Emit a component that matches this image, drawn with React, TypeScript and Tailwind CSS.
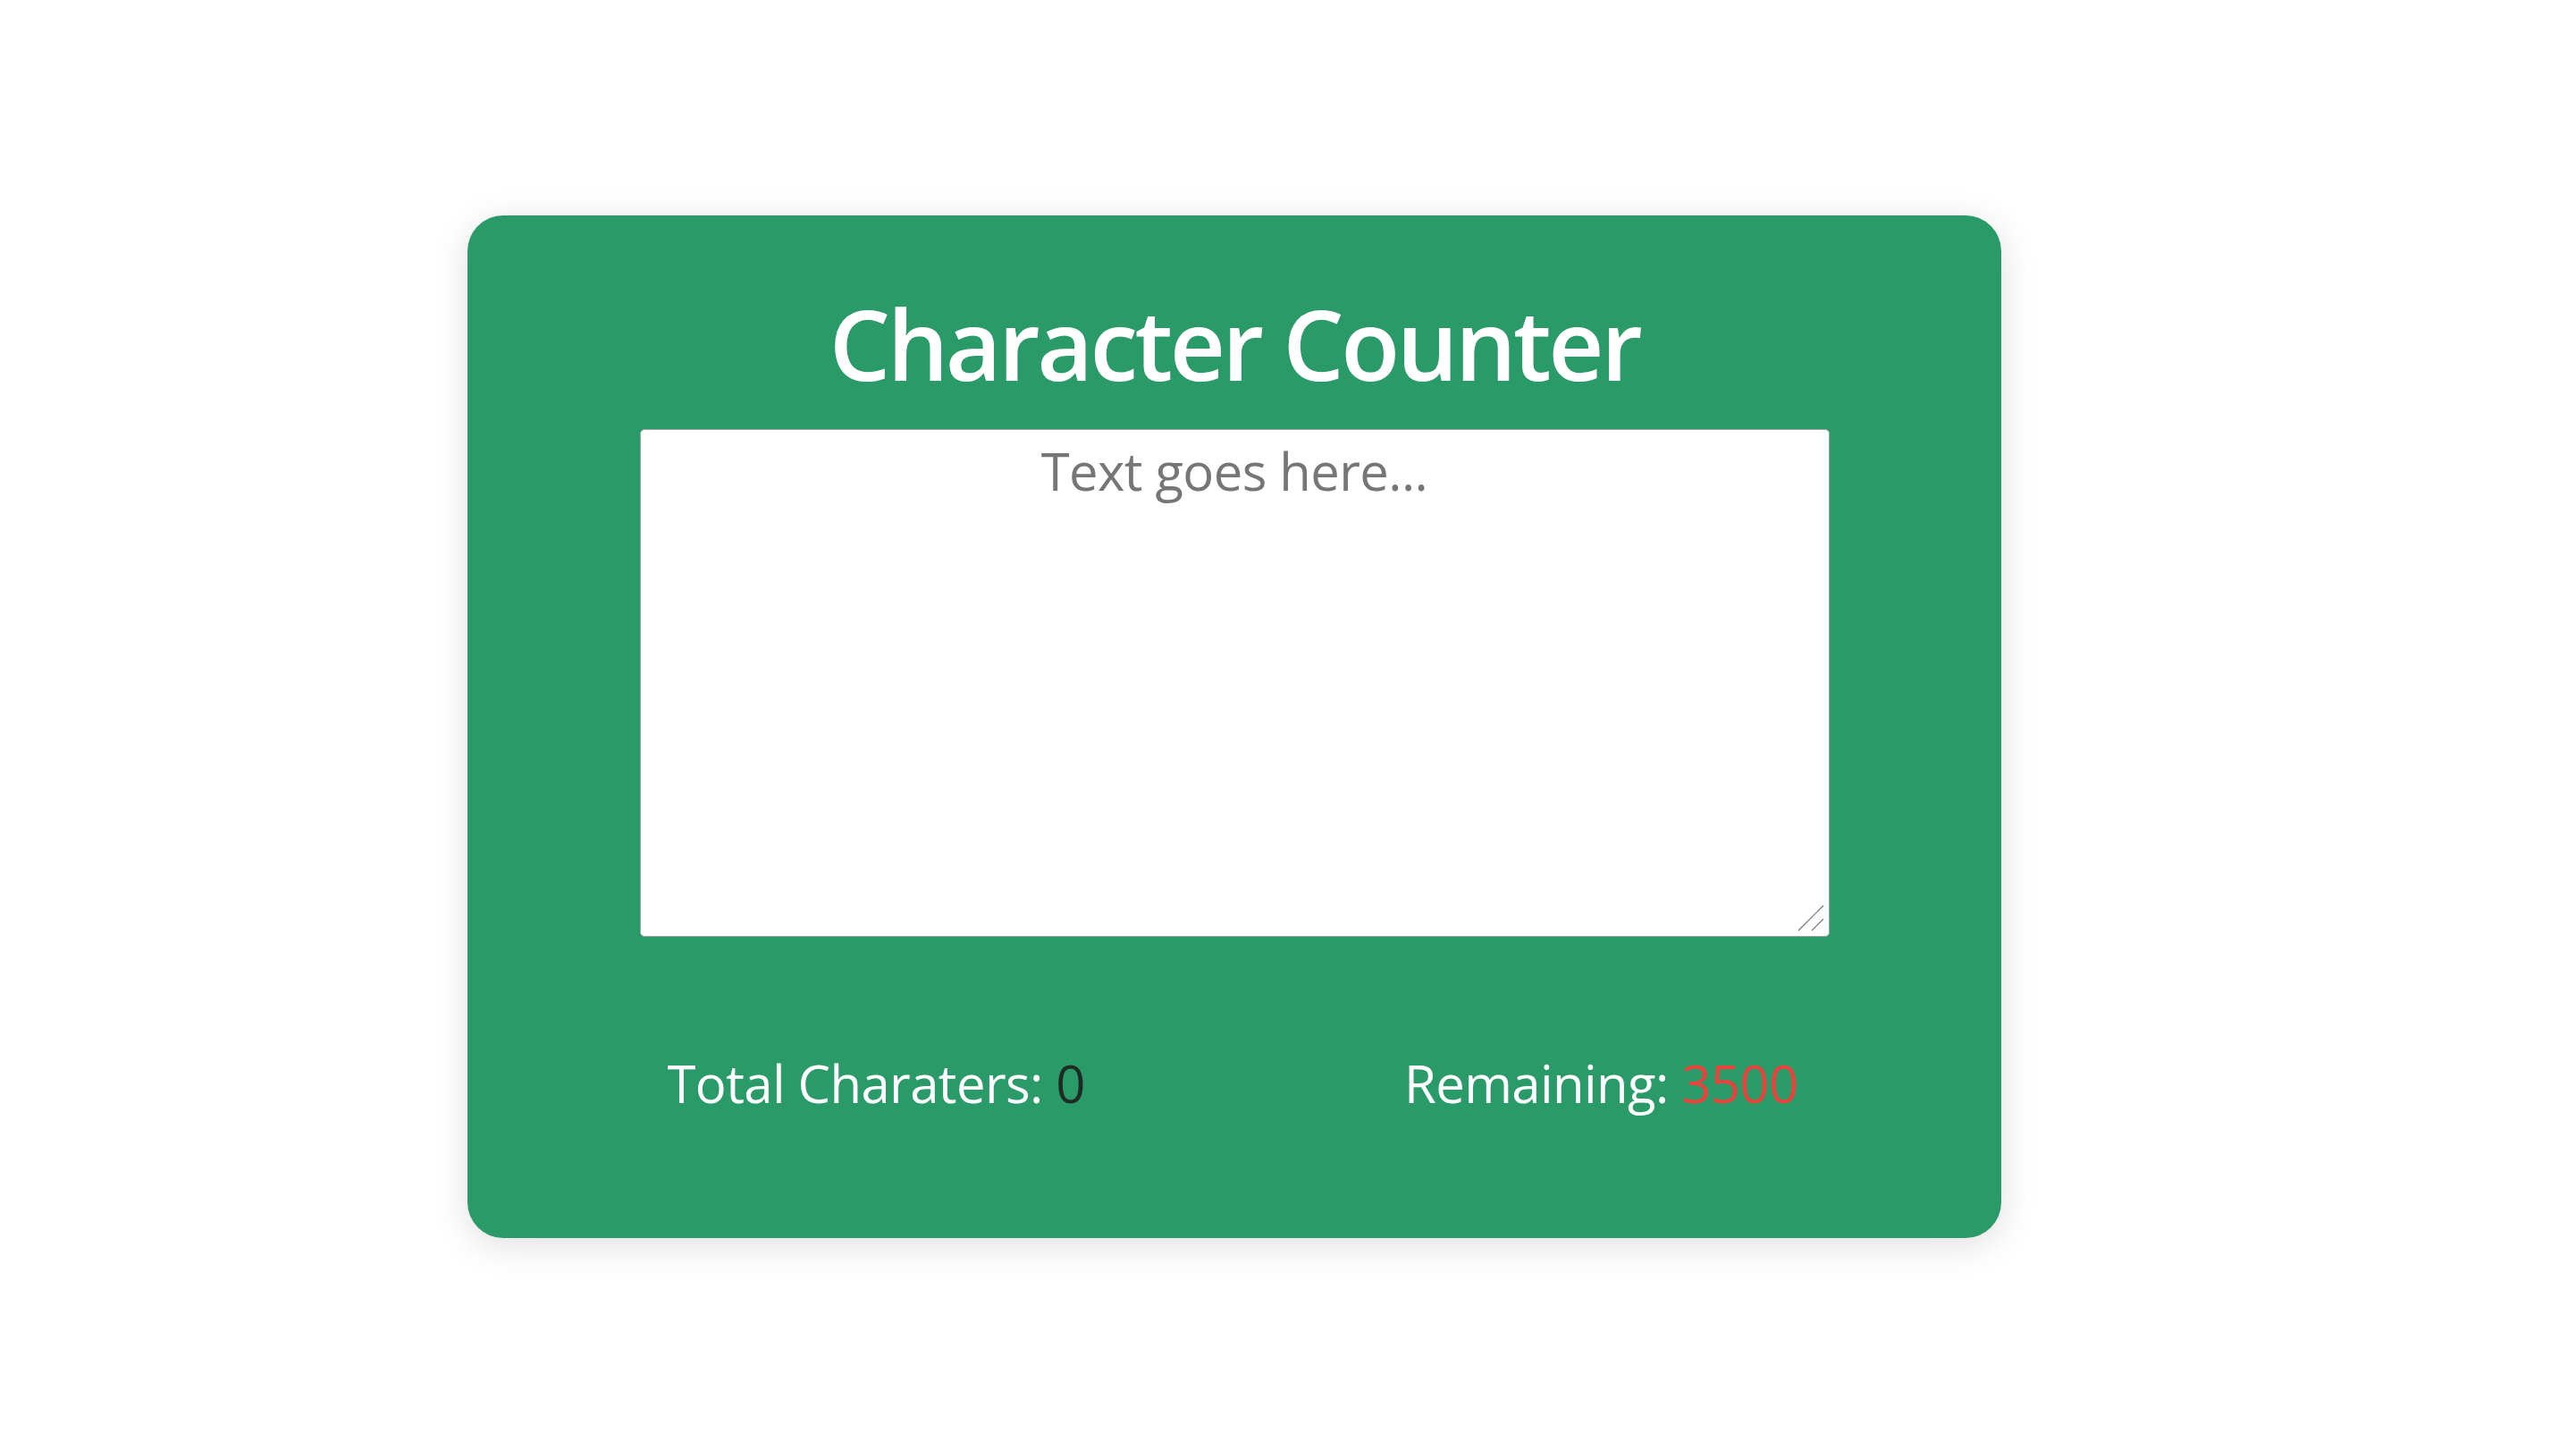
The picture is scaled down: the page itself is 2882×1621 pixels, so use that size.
import { useState } from "react";

const MAX_CHARS = 3500;

function App() {
  const [text, setText] = useState("");

  return (
    <div className="min-h-screen bg-white pt-[241px] pl-[523px] font-['Open_Sans',sans-serif]">
      <div className="flex h-[1144px] w-[1716px] flex-col items-center rounded-[40px] bg-[#2a9a68] pt-[90px] shadow-[0_8px_40px_rgba(0,0,0,0.13)]">
        <h1 className="text-[108px] leading-none font-semibold tracking-[-0.032em] text-white">
          Character Counter
        </h1>
        <div className="relative mt-[41px]">
          <textarea
            value={text}
            onChange={(e) => setText(e.target.value)}
            placeholder="Text goes here..."
            className="block h-[568px] w-[1331px] resize-none rounded-[5px] border border-[#9aa5a0] bg-white px-2 pt-[6px] text-center text-[58px] leading-[normal] tracking-[-0.01em] text-[#333] outline-none placeholder:text-[#767676]"
          />
          {/* resize grip */}
          <svg
            className="pointer-events-none absolute right-[5px] bottom-[5px]"
            width="32"
            height="32"
            viewBox="0 0 32 32"
          >
            <line x1="2" y1="30" x2="30" y2="2" stroke="#777" strokeWidth="1.2" />
            <line x1="17" y1="30" x2="30" y2="17" stroke="#777" strokeWidth="1.2" />
          </svg>
        </div>
        <div className="mt-[124px] flex w-[1331px] justify-between pl-[31px] pr-[35px] text-[58px] leading-[normal] tracking-[-0.01em] text-white">
          <p>
            Total Charaters: <span className="text-[#1d2b24]">{text.length}</span>
          </p>
          <p>
            Remaining: <span className="text-[#e8433b]">{MAX_CHARS - text.length}</span>
          </p>
        </div>
      </div>
    </div>
  );
}

export default App;
